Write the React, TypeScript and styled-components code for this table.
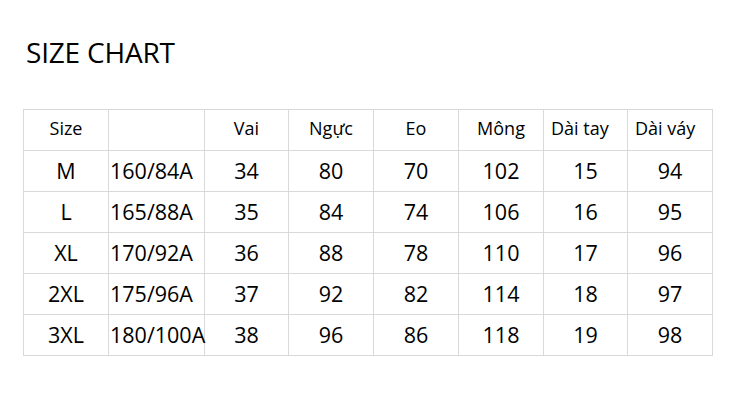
import React from "react";
import styled, { createGlobalStyle } from "styled-components";

const GlobalStyle = createGlobalStyle`
  html, body {
    margin: 0;
    padding: 0;
    background: #ffffff;
  }
  body {
    font-family: "Open Sans", "Noto Sans", sans-serif;
    color: #000000;
  }
`;

const Page = styled.div`
  width: 745px;
  height: 414px;
  box-sizing: border-box;
  padding: 33px 0 0 23px;
  background: #ffffff;
`;

const Title = styled.h1`
  margin: 0 0 38px 3px;
  font-size: 28px;
  line-height: 38px;
  font-weight: 400;
  letter-spacing: -0.2px;
`;

const Grid = styled.div`
  display: grid;
  grid-template-columns: 85px 96px 84px 85px 85px 85px 84px 85px;
  grid-auto-rows: 41px;
  width: 690px;
  box-sizing: border-box;
  border-left: 1px solid #d9d9d9;
  border-top: 1px solid #d9d9d9;
`;

type Align = "center" | "left";

const Cell = styled.div<{ $align?: Align; $header?: boolean }>`
  box-sizing: border-box;
  border-right: 1px solid #d9d9d9;
  border-bottom: 1px solid #d9d9d9;
  display: flex;
  align-items: center;
  justify-content: ${(p) => (p.$align === "left" ? "flex-start" : "center")};
  padding: ${(p) =>
    p.$header
      ? p.$align === "left"
        ? "0 0 5px 7px"
        : "0 0 5px 0"
      : p.$align === "left"
      ? "0 0 0 1px"
      : "0"};
  font-size: ${(p) => (p.$header ? "18px" : "21.5px")};
  white-space: nowrap;
  overflow: visible;
  line-height: 1;
`;

const headers: { label: string; align: Align }[] = [
  { label: "Size", align: "center" },
  { label: "", align: "center" },
  { label: "Vai", align: "center" },
  { label: "Ngực", align: "center" },
  { label: "Eo", align: "center" },
  { label: "Mông", align: "center" },
  { label: "Dài tay", align: "left" },
  { label: "Dài váy", align: "left" },
];

const rows: (string | number)[][] = [
  ["M", "160/84A", 34, 80, 70, 102, 15, 94],
  ["L", "165/88A", 35, 84, 74, 106, 16, 95],
  ["XL", "170/92A", 36, 88, 78, 110, 17, 96],
  ["2XL", "175/96A", 37, 92, 82, 114, 18, 97],
  ["3XL", "180/100A", 38, 96, 86, 118, 19, 98],
];

export default function App() {
  return (
    <>
      <GlobalStyle />
      <Page>
        <Title>SIZE CHART</Title>
        <Grid>
          {headers.map((h, i) => (
            <Cell key={`h${i}`} $header $align={h.align}>
              {h.label}
            </Cell>
          ))}
          {rows.map((r, ri) =>
            r.map((v, ci) => (
              <Cell key={`${ri}-${ci}`} $align={ci === 1 ? "left" : "center"}>
                {v}
              </Cell>
            ))
          )}
        </Grid>
      </Page>
    </>
  );
}
